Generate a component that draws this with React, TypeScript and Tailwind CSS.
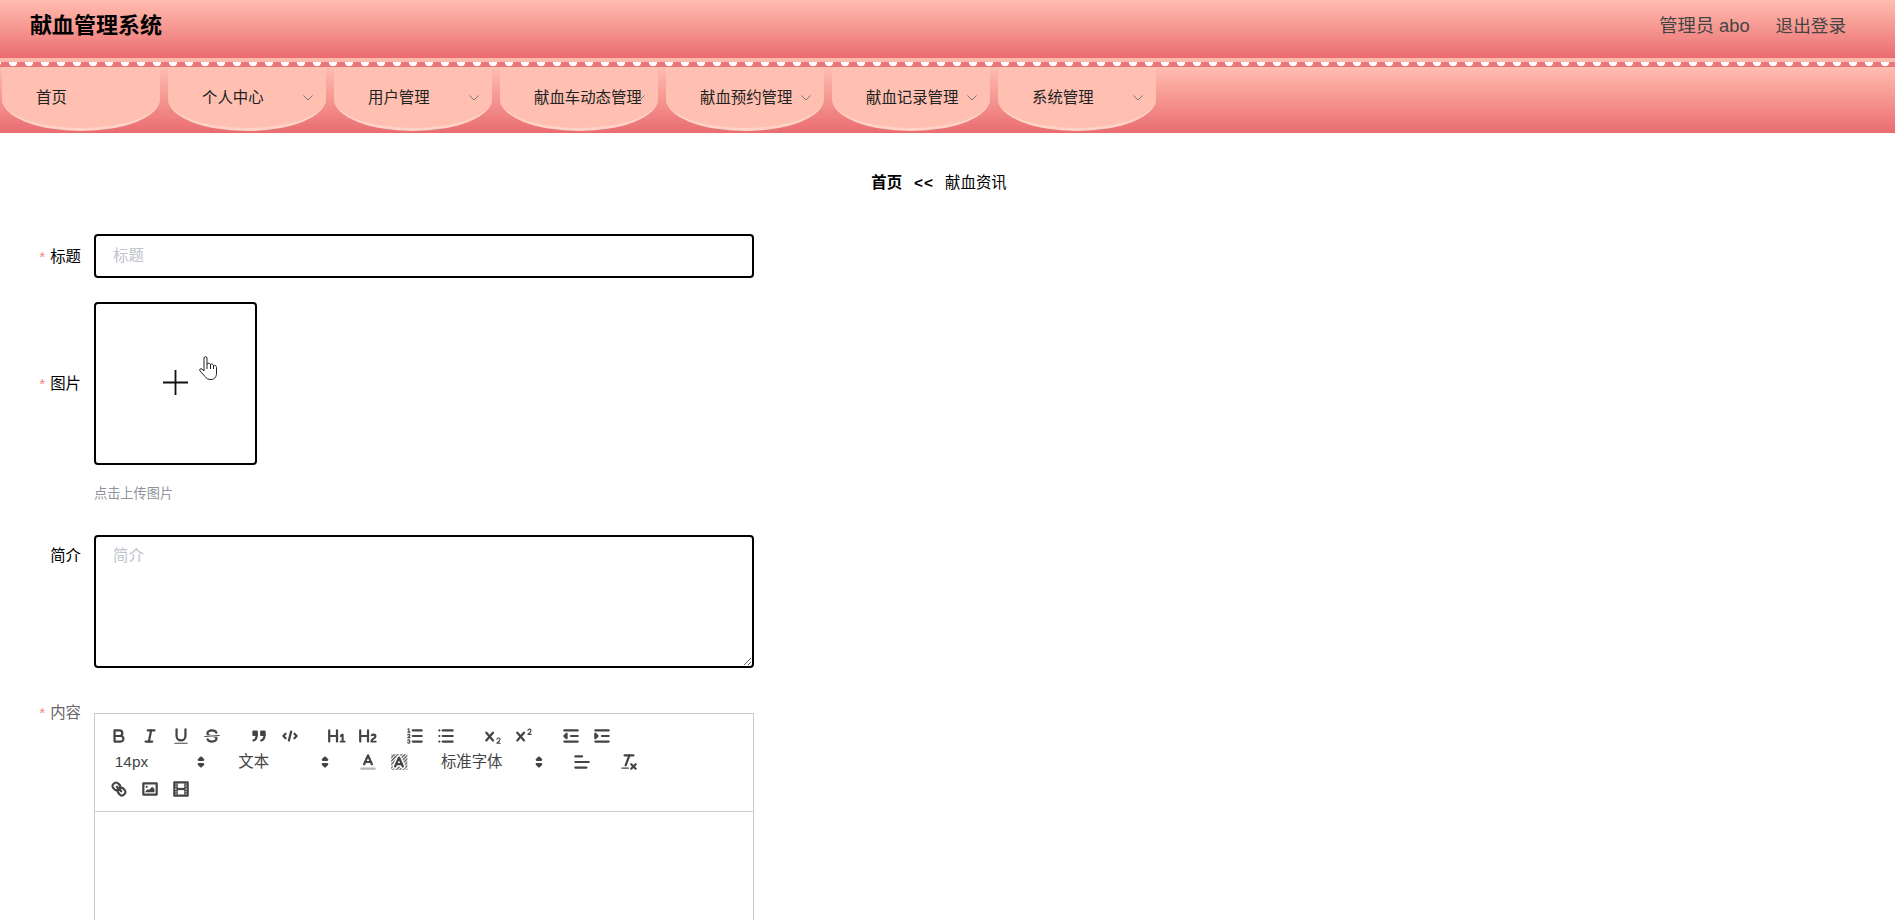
import React from "react"

const menus = [
  { label: "首页", arrow: false },
  { label: "个人中心", arrow: true },
  { label: "用户管理", arrow: true },
  { label: "献血车动态管理", arrow: true },
  { label: "献血预约管理", arrow: true },
  { label: "献血记录管理", arrow: true },
  { label: "系统管理", arrow: true },
]

const Stroke = ({ children }: { children: React.ReactNode }) => (
  <g fill="none" stroke="#444" strokeWidth="2" strokeLinecap="round" strokeLinejoin="round">
    {children}
  </g>
)

const Thin = ({ children }: { children: React.ReactNode }) => (
  <g fill="none" stroke="#444" strokeWidth="1" strokeLinecap="round" strokeLinejoin="round">
    {children}
  </g>
)

const Fill = ({ children }: { children: React.ReactNode }) => <g fill="#444">{children}</g>

const icons: Record<string, React.ReactNode> = {
  bold: (
    <Stroke>
      <path d="M5,4H9.5A2.5,2.5,0,0,1,12,6.5v0A2.5,2.5,0,0,1,9.5,9H5V4Z" />
      <path d="M5,9h5.5A2.5,2.5,0,0,1,13,11.5v0A2.5,2.5,0,0,1,10.5,14H5V9Z" />
    </Stroke>
  ),
  italic: (
    <Stroke>
      <line x1="7" x2="13" y1="4" y2="4" />
      <line x1="5" x2="11" y1="14" y2="14" />
      <line x1="8" x2="10" y1="14" y2="4" />
    </Stroke>
  ),
  underline: (
    <>
      <Stroke>
        <path d="M5,3V9a4.012,4.012,0,0,0,4,4H9a4.012,4.012,0,0,0,4-4V3" />
      </Stroke>
      <Fill>
        <rect height="1" rx="0.5" ry="0.5" width="12" x="3" y="15" />
      </Fill>
    </>
  ),
  strike: (
    <>
      <Thin>
        <line x1="15.5" x2="2.5" y1="8.5" y2="9.5" />
      </Thin>
      <Fill>
        <path d="M9.007,8C6.542,7.791,6,7.519,6,6.5,6,5.792,7.283,5,9,5c1.571,0,2.765.679,2.969,1.309a1,1,0,0,0,1.9-.617C13.356,4.106,11.354,3,9,3,6.2,3,4,4.538,4,6.5a3.2,3.2,0,0,0,.5,1.843Z" />
        <path d="M8.984,10C11.457,10.208,12,10.479,12,11.5c0,.708-1.283,1.5-3,1.5-1.571,0-2.765-.679-2.969-1.309a1,1,0,1,0-1.9.617C4.644,13.894,6.646,15,9,15c2.8,0,5-1.538,5-3.5a3.2,3.2,0,0,0-.5-1.843Z" />
      </Fill>
    </>
  ),
  quote: (
    <g fill="#444" stroke="#444" strokeWidth="2" strokeLinecap="round" strokeLinejoin="round">
      <rect height="3" width="3" x="4" y="5" />
      <rect height="3" width="3" x="11" y="5" />
      <path fill="none" d="M7,8c0,4.031-3,5-3,5" />
      <path fill="none" d="M14,8c0,4.031-3,5-3,5" />
    </g>
  ),
  code: (
    <Stroke>
      <polyline points="5 7 3 9 5 11" />
      <polyline points="13 7 15 9 13 11" />
      <line x1="10" x2="8" y1="5" y2="13" />
    </Stroke>
  ),
  h1: (
    <Fill>
      <path d="M10,4V14a1,1,0,0,1-2,0V10H3v4a1,1,0,0,1-2,0V4A1,1,0,0,1,3,4V8H8V4a1,1,0,0,1,2,0Zm6.06787,9.209H14.98975V7.59863a.54085.54085,0,0,0-.605-.60547h-.62744a1.01119,1.01119,0,0,0-.748.29688L11.645,8.56641a.5435.5435,0,0,0-.022.8584l.28613.30762a.53861.53861,0,0,0,.84717.0332l.09912-.08789a1.2137,1.2137,0,0,0,.2417-.35254h.02246s-.01123.30859-.01123.60547V13.209H12.041a.54085.54085,0,0,0-.605.60547v.43945a.54085.54085,0,0,0,.605.60547h4.02686a.54085.54085,0,0,0,.605-.60547v-.43945A.54085.54085,0,0,0,16.06787,13.209Z" />
    </Fill>
  ),
  h2: (
    <Fill>
      <path d="M16.73975,13.81445v.43945a.54085.54085,0,0,1-.605.60547H11.855a.58392.58392,0,0,1-.64893-.60547V14.0127c0-2.90527,3.39941-3.42187,3.39941-4.55469a.77675.77675,0,0,0-.84717-.78125,1.17684,1.17684,0,0,0-.83594.38477c-.2749.26367-.561.374-.85791.13184l-.4292-.34082c-.30811-.24219-.38525-.51758-.1543-.81445a2.97155,2.97155,0,0,1,2.45361-1.17676,2.45393,2.45393,0,0,1,2.68408,2.40918c0,2.45312-3.1792,2.92676-3.27832,3.93848h2.79443A.54085.54085,0,0,1,16.73975,13.81445ZM9,3A.99974.99974,0,0,0,8,4V8H3V4A1,1,0,0,0,1,4V14a1,1,0,0,0,2,0V10H8v4a1,1,0,0,0,2,0V4A.99974.99974,0,0,0,9,3Z" />
    </Fill>
  ),
  ordered: (
    <>
      <Stroke>
        <line x1="7" x2="15" y1="4" y2="4" />
        <line x1="7" x2="15" y1="9" y2="9" />
        <line x1="7" x2="15" y1="14" y2="14" />
      </Stroke>
      <Thin>
        <line x1="2.5" x2="4.5" y1="5.5" y2="5.5" />
        <path d="M4.5,10.5h-2c0-.234,1.85-1.076,1.85-2.234A0.959,0.959,0,0,0,2.5,8.156" />
        <path d="M2.5,14.846a0.959,0.959,0,0,0,1.85-.109A0.7,0.7,0,0,0,3.75,14a0.688,0.688,0,0,0,.6-0.736,0.959,0.959,0,0,0-1.85-.109" />
      </Thin>
      <Fill>
        <path d="M3.5,6A0.5,0.5,0,0,1,3,5.5V3.085l-0.276.138A0.5,0.5,0,0,1,2.053,3c-0.124-.247-0.023-0.324.224-0.447l1-.5A0.5,0.5,0,0,1,4,2.5v3A0.5,0.5,0,0,1,3.5,6Z" />
      </Fill>
    </>
  ),
  bullet: (
    <Stroke>
      <line x1="6" x2="15" y1="4" y2="4" />
      <line x1="6" x2="15" y1="9" y2="9" />
      <line x1="6" x2="15" y1="14" y2="14" />
      <line x1="3" x2="3" y1="4" y2="4" />
      <line x1="3" x2="3" y1="9" y2="9" />
      <line x1="3" x2="3" y1="14" y2="14" />
    </Stroke>
  ),
  sub: (
    <Fill>
      <path d="M15.5,15H13.861a3.858,3.858,0,0,0,1.914-2.975,1.8,1.8,0,0,0-1.6-1.751A1.921,1.921,0,0,0,12.021,11.7a0.50013,0.50013,0,1,0,.957.291h0a0.914,0.914,0,0,1,1.053-.725,0.81,0.81,0,0,1,.744.762c0,1.076-1.16971,1.86982-1.93971,2.43082A1.45639,1.45639,0,0,0,12,15.5a0.5,0.5,0,0,0,.5.5h3A0.5,0.5,0,0,0,15.5,15Z" />
      <path d="M9.65,5.241a1,1,0,0,0-1.409.108L6,7.964,3.759,5.349A1,1,0,0,0,2.192,6.59178Q2.21541,6.6213,2.241,6.649L4.684,9.5,2.241,12.35A1,1,0,0,0,3.71,13.70722q0.02557-.02768.049-0.05722L6,11.036,8.241,13.65a1,1,0,1,0,1.567-1.24277Q9.78459,12.3777,9.759,12.35L7.316,9.5,9.759,6.651A1,1,0,0,0,9.65,5.241Z" />
    </Fill>
  ),
  sup: (
    <Fill>
      <path d="M15.5,7H13.861a4.015,4.015,0,0,0,1.914-2.975,1.8,1.8,0,0,0-1.6-1.751A1.922,1.922,0,0,0,12.021,3.7a0.5,0.5,0,1,0,.957.291,0.917,0.917,0,0,1,1.053-.725,0.81,0.81,0,0,1,.744.762c0,1.077-1.164,1.925-1.934,2.486A1.423,1.423,0,0,0,12,7.5a0.5,0.5,0,0,0,.5.5h3A0.5,0.5,0,0,0,15.5,7Z" />
      <path d="M9.651,5.241a1,1,0,0,0-1.41.108L6,7.964,3.759,5.349a1,1,0,1,0-1.519,1.3L4.683,9.5,2.241,12.35a1,1,0,1,0,1.519,1.3L6,11.036l2.241,2.616a1,1,0,0,0,1.519-1.3L7.317,9.5,9.759,6.651A1,1,0,0,0,9.651,5.241Z" />
    </Fill>
  ),
  outdent: (
    <Stroke>
      <line x1="3" x2="15" y1="14" y2="14" />
      <line x1="3" x2="15" y1="4" y2="4" />
      <line x1="9" x2="15" y1="9" y2="9" />
      <polygon fill="#444" points="5 7 5 11 3 9 5 7" />
    </Stroke>
  ),
  indent: (
    <Stroke>
      <line x1="3" x2="15" y1="14" y2="14" />
      <line x1="3" x2="15" y1="4" y2="4" />
      <line x1="9" x2="15" y1="9" y2="9" />
      <polygon fill="#444" points="3 7 3 11 5 9 3 7" />
    </Stroke>
  ),
  color: (
    <>
      <g fill="none" stroke="#444" strokeOpacity="0.4" strokeWidth="2" strokeLinecap="round">
        <line x1="3" x2="15" y1="15" y2="15" />
      </g>
      <Stroke>
        <polyline points="5.5 11 9 3 12.5 11" />
        <line x1="11.63" x2="6.38" y1="9" y2="9" />
      </Stroke>
    </>
  ),
  background: (
    <>
      <defs>
        <pattern id="hatch" width="2.2" height="2.2" patternUnits="userSpaceOnUse" patternTransform="rotate(45)">
          <rect width="1.2" height="2.2" fill="#555" />
        </pattern>
      </defs>
      <rect x="2" y="2" width="14.5" height="14" fill="url(#hatch)" />
      <g fill="none" stroke="#fff" strokeWidth="4.5" strokeLinecap="round" strokeLinejoin="round">
        <polyline points="5.5 13 9 5 12.5 13" />
        <line x1="11.63" x2="6.38" y1="11" y2="11" />
      </g>
      <Stroke>
        <polyline points="5.5 13 9 5 12.5 13" />
        <line x1="11.63" x2="6.38" y1="11" y2="11" />
      </Stroke>
    </>
  ),
  align: (
    <Stroke>
      <line x1="3" x2="15" y1="9" y2="9" />
      <line x1="3" x2="13" y1="14" y2="14" />
      <line x1="3" x2="9" y1="4" y2="4" />
    </Stroke>
  ),
  clean: (
    <>
      <Stroke>
        <line x1="5" x2="13" y1="3" y2="3" />
        <line x1="6" x2="9.35" y1="12" y2="3" />
        <line x1="11" x2="15" y1="11" y2="15" />
        <line x1="15" x2="11" y1="11" y2="15" />
      </Stroke>
      <Fill>
        <rect height="1" rx="0.5" ry="0.5" width="7" x="2" y="14" />
      </Fill>
    </>
  ),
  link: (
    <Stroke>
      <line x1="7" x2="11" y1="7" y2="11" />
      <path d="M8.9,4.577a3.476,3.476,0,0,1,.36,4.679A3.476,3.476,0,0,1,4.577,8.9C3.185,7.5,2.035,6.4,4.217,4.217S7.5,3.185,8.9,4.577Z" />
      <path d="M13.423,9.1a3.476,3.476,0,0,0-4.679-.36,3.476,3.476,0,0,0,.36,4.679c1.392,1.392,2.5,2.542,4.679.36S14.815,10.5,13.423,9.1Z" />
    </Stroke>
  ),
  image: (
    <>
      <Stroke>
        <rect height="10" width="12" x="3" y="4" />
      </Stroke>
      <Fill>
        <circle cx="6" cy="7" r="1" />
        <polygon points="5 12 5 11 7 9 8 10 11 7 13 9 13 12 5 12" />
      </Fill>
    </>
  ),
  video: (
    <>
      <Stroke>
        <rect height="12" width="12" x="3" y="3" />
      </Stroke>
      <Fill>
        <rect height="12" width="1" x="5" y="3" />
        <rect height="12" width="1" x="12" y="3" />
        <rect height="2" width="8" x="5" y="8" />
        <rect height="1" width="3" x="3" y="5" />
        <rect height="1" width="3" x="3" y="7" />
        <rect height="1" width="3" x="3" y="10" />
        <rect height="1" width="3" x="3" y="12" />
        <rect height="1" width="3" x="12" y="5" />
        <rect height="1" width="3" x="12" y="7" />
        <rect height="1" width="3" x="12" y="10" />
        <rect height="1" width="3" x="12" y="12" />
      </Fill>
    </>
  ),
}

const Tool = ({ name }: { name: string }) => (
  <span className="flex h-[26.4px] w-[30.8px] items-center justify-center">
    <svg viewBox="0 0 18 18" className="h-[20px] w-[20px]">
      {icons[name]}
    </svg>
  </span>
)

const Group = ({ names }: { names: string[] }) => (
  <span className="mr-[16.5px] flex">
    {names.map((n) => (
      <Tool key={n} name={n} />
    ))}
  </span>
)

const Picker = ({ label, className }: { label: string; className: string }) => (
  <span className={`mr-[16.5px] flex h-[26.4px] items-center justify-between pr-[1px] text-[15.4px] text-[#444] ${className}`}>
    <span className="pb-[1px]">{label}</span>
    <svg viewBox="0 0 18 18" className="h-[20px] w-[20px]">
      <g fill="#444" stroke="#444" strokeWidth="2" strokeLinejoin="round">
        <polygon points="7 11 9 13 11 11 7 11" />
        <polygon points="7 7 9 5 11 7 7 7" />
      </g>
    </svg>
  </span>
)

const Label = ({ text, required, className }: { text: string; required?: boolean; className?: string }) => (
  <label className={`w-[94px] shrink-0 pr-[13px] text-right text-[15.4px] ${className ?? "text-black"}`}>
    {required && <span className="mr-[5px] text-[#f08a85]">*</span>}
    {text}
  </label>
)

export default function App() {
  return (
    <div className="h-screen overflow-hidden bg-white font-['Liberation_Sans','Noto_Sans_CJK_SC',sans-serif]">
      <header className="flex h-[58px] items-center justify-between bg-gradient-to-b from-[#ffbdb0] to-[#e96c70] pb-[6px] pl-[30px] pr-[49px]">
        <h1 className="mb-[2px] text-[22px] font-bold text-black">献血管理系统</h1>
        <div className="flex items-center gap-[26px] text-[#444]">
          <span className="text-[18.3px]">管理员 abo</span>
          <span className="text-[17.6px]">退出登录</span>
        </div>
      </header>

      <div className="h-[4px] bg-[#ffb9ab]" />
      <div className="h-[5px] bg-[#e8767a] bg-[radial-gradient(circle_at_8px_0,#fff_4px,transparent_4.5px)] bg-[length:16px_5px] bg-[position:5px_0]" />

      <nav className="flex h-[66px] items-start gap-[8.5px] bg-gradient-to-b from-[#ffbdb0] to-[#e96c70] pl-[2px]">
        {menus.map((m) => (
          <div
            key={m.label}
            className="relative flex h-[64px] w-[157.5px] items-center rounded-b-[50%_32px] border-b-[3px] border-[#ffd3c8] bg-[#ffc0b2] pl-[34px] pt-[1px] text-[15.4px] text-[#222]"
          >
            <span className="whitespace-nowrap">{m.label}</span>
            {m.arrow && (
              <svg viewBox="0 0 12 12" className="absolute right-[12px] top-[25px] h-[12px] w-[12px]">
                <polyline points="1.5,3.5 6,8 10.5,3.5" fill="none" stroke="#777" strokeWidth="1" />
              </svg>
            )}
          </div>
        ))}
      </nav>

      <div className="flex h-[101px] justify-center pr-[17px] pt-[40px] text-[15.4px] leading-[20px] text-black">
        <span className="font-bold">首页</span>
        <span className="ml-[12px] mr-[11px] font-bold tracking-[1px]">{"<<"}</span>
        <span>献血资讯</span>
      </div>

      <form className="flex flex-col">
        <div className="flex h-[44px] items-center">
          <Label text="标题" required className="pt-[2px] text-black" />
          <input
            placeholder="标题"
            className="h-[44px] w-[660px] rounded-[4px] border-2 border-black bg-white pb-[1px] pl-[17px] text-[15.4px] outline-none placeholder:text-[#c0c4cc]"
          />
        </div>

        <div className="mt-[24px] flex h-[163px] items-center">
          <Label text="图片" required className="pt-[1px] text-black" />
          <div className="relative flex h-[163px] w-[163px] items-center justify-center rounded-[4px] border-2 border-black bg-white pb-[3px]">
            <svg viewBox="0 0 25 25" className="h-[25px] w-[25px]">
              <path d="M0 12.5H25M12.5 0V25" fill="none" stroke="#111" strokeWidth="1.8" />
            </svg>
            <svg viewBox="0 0 18 24" className="absolute left-[103px] top-[52px] h-[24px] w-[18px]">
              <path
                d="M5 2C5 .2 8 .2 8 2V8C9 7 11 7 11.5 8.5C12.5 7.5 14 8 14.5 9.5C15.5 9 17.5 9.5 17.5 11.5V17C17.5 21 15.5 23.5 12 23.5C9 23.5 7.5 22.5 6 20.5L1 15C0 13.5 1.5 12 3 13L5 15Z"
                fill="#fff"
                stroke="#222"
                strokeWidth="1"
              />
              <path d="M8 8V13M11.5 8.5V13M14.5 9.5V13" fill="none" stroke="#222" strokeWidth="1" />
            </svg>
          </div>
        </div>

        <p className="ml-[94px] mt-[20px] text-[13.2px] leading-[18px] text-[#8f949c]">点击上传图片</p>

        <div className="mt-[32px] flex items-start">
          <Label text="简介" className="pt-[9px] text-black" />
          <textarea
            placeholder="简介"
            className="h-[133px] w-[660px] rounded-[4px] border-2 border-black bg-white pl-[17px] pt-[9px] text-[15.4px] leading-[20px] outline-none placeholder:text-[#c0c4cc]"
          />
        </div>

        <div className="mt-[33px] flex items-start">
          <Label text="内容" required className="text-[#666]" />
          <div className="mt-[12px] h-[400px] w-[660px] border border-[#ccc]">
            <div className="border-b border-[#ccc] px-[8.8px] py-[8.8px]">
              <div className="flex">
                <Group names={["bold", "italic", "underline", "strike"]} />
                <Group names={["quote", "code"]} />
                <Group names={["h1", "h2"]} />
                <Group names={["ordered", "bullet"]} />
                <Group names={["sub", "sup"]} />
                <Group names={["outdent", "indent"]} />
              </div>
              <div className="flex">
                <Picker label="14px" className="w-[108px] pl-[11px]" />
                <Picker label="文本" className="w-[108px] pl-[10px]" />
                <Group names={["color", "background"]} />
                <Picker label="标准字体" className="w-[119px] pl-[10px]" />
                <Group names={["align"]} />
                <Group names={["clean"]} />
              </div>
              <div className="flex">
                <Group names={["link", "image", "video"]} />
              </div>
            </div>
          </div>
        </div>
      </form>
    </div>
  )
}
